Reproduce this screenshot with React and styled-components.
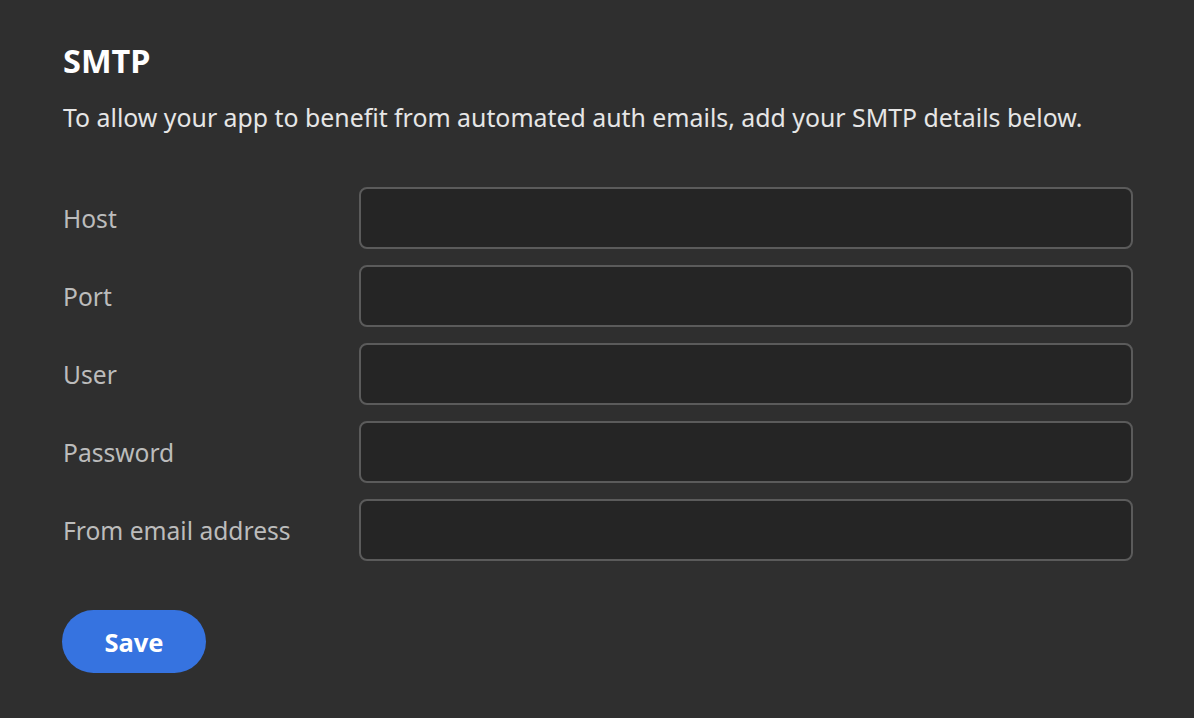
import React from "react";
import styled, { createGlobalStyle } from "styled-components";

const Global = createGlobalStyle`
  html, body { margin: 0; padding: 0; background: #2f2f2f; }
  body { font-family: "Noto Sans", "Open Sans", sans-serif; }
`;

const Page = styled.div`
  width: 1194px;
  height: 718px;
  box-sizing: border-box;
  padding: 40px 61px 0 63px;
  background: #2f2f2f;
  display: flex;
  flex-direction: column;
`;

const Title = styled.h1`
  margin: 0;
  font-size: 32.5px;
  line-height: 42px;
  font-weight: 700;
  color: #ffffff;
`;

const Lead = styled.p`
  margin: 18px 0 0;
  font-size: 24.85px;
  line-height: 34px;
  color: #e6e6e6;
  white-space: nowrap;
`;

const Form = styled.form`
  margin-top: 53px;
  display: flex;
  flex-direction: column;
  gap: 16px;
`;

const Row = styled.div`
  display: grid;
  grid-template-columns: 296px 1fr;
  align-items: center;
`;

const Label = styled.label`
  font-size: 24.6px;
  color: #bcbcbc;
`;

const Input = styled.input`
  box-sizing: border-box;
  height: 62px;
  width: 100%;
  margin: 0;
  border: 2px solid #5b5b5b;
  border-radius: 8px;
  background: #252525;
  color: #fff;
  font: inherit;
  font-size: 22px;
  padding: 0 16px;
  outline: none;
`;

const Save = styled.button`
  margin-top: 49px;
  margin-left: -1px;
  align-self: flex-start;
  width: 144px;
  height: 63px;
  padding: 0;
  border: none;
  border-radius: 32px;
  background: #3673e0;
  color: #fff;
  font-family: inherit;
  font-size: 25.5px;
  font-weight: 700;
`;

const fields = ["Host", "Port", "User", "Password", "From email address"];

export default function App() {
  return (
    <>
      <Global />
      <Page>
        <Title>SMTP</Title>
        <Lead>To allow your app to benefit from automated auth emails, add your SMTP details below.</Lead>
        <Form onSubmit={(e) => e.preventDefault()}>
          {fields.map((f) => (
            <Row key={f}>
              <Label>{f}</Label>
              <Input type={f === "Password" ? "password" : "text"} />
            </Row>
          ))}
        </Form>
        <Save type="button">Save</Save>
      </Page>
    </>
  );
}
